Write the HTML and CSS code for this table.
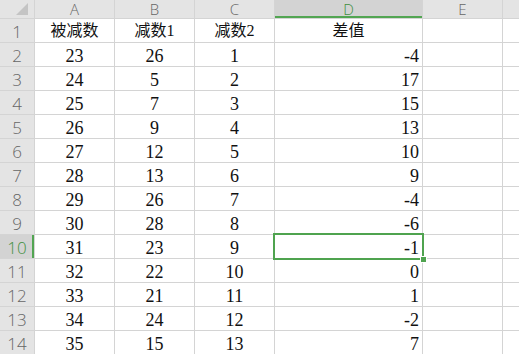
FILE: index.html
```html
<!DOCTYPE html>
<html lang="zh">
<head>
<meta charset="utf-8">
<link rel="stylesheet" href="styles.css">
</head>
<body>
<div class="sheet">
  <div class="corner"><svg width="34" height="18" viewBox="0 0 34 18"><polygon points="28,3 28,15 16,15" fill="#c4c4c4"/></svg></div>
  <div class="ch">A</div><div class="ch">B</div><div class="ch">C</div><div class="ch sel">D</div><div class="ch">E</div><div class="ch"></div>

  <div class="rh">1</div><div class="c zh">被减数</div><div class="c zh">减数1</div><div class="c zh">减数2</div><div class="c zh">差值</div><div class="c e"></div><div class="c e"></div>
  <div class="rh">2</div><div class="c">23</div><div class="c">26</div><div class="c">1</div><div class="c r">-4</div><div class="c e"></div><div class="c e"></div>
  <div class="rh">3</div><div class="c">24</div><div class="c">5</div><div class="c">2</div><div class="c r">17</div><div class="c e"></div><div class="c e"></div>
  <div class="rh">4</div><div class="c">25</div><div class="c">7</div><div class="c">3</div><div class="c r">15</div><div class="c e"></div><div class="c e"></div>
  <div class="rh">5</div><div class="c">26</div><div class="c">9</div><div class="c">4</div><div class="c r">13</div><div class="c e"></div><div class="c e"></div>
  <div class="rh">6</div><div class="c">27</div><div class="c">12</div><div class="c">5</div><div class="c r">10</div><div class="c e"></div><div class="c e"></div>
  <div class="rh">7</div><div class="c">28</div><div class="c">13</div><div class="c">6</div><div class="c r">9</div><div class="c e"></div><div class="c e"></div>
  <div class="rh">8</div><div class="c">29</div><div class="c">26</div><div class="c">7</div><div class="c r">-4</div><div class="c e"></div><div class="c e"></div>
  <div class="rh">9</div><div class="c">30</div><div class="c">28</div><div class="c">8</div><div class="c r">-6</div><div class="c e"></div><div class="c e"></div>
  <div class="rh sel">10</div><div class="c">31</div><div class="c">23</div><div class="c">9</div><div class="c r active">-1<span class="box"><span class="handle"></span></span></div><div class="c e"></div><div class="c e"></div>
  <div class="rh">11</div><div class="c">32</div><div class="c">22</div><div class="c">10</div><div class="c r">0</div><div class="c e"></div><div class="c e"></div>
  <div class="rh">12</div><div class="c">33</div><div class="c">21</div><div class="c">11</div><div class="c r">1</div><div class="c e"></div><div class="c e"></div>
  <div class="rh">13</div><div class="c">34</div><div class="c">24</div><div class="c">12</div><div class="c r">-2</div><div class="c e"></div><div class="c e"></div>
  <div class="rh">14</div><div class="c">35</div><div class="c">15</div><div class="c">13</div><div class="c r">7</div><div class="c e"></div><div class="c e"></div>
</div>
</body>
</html>
```

FILE: styles.css
```css
html, body {
  margin: 0;
  padding: 0;
  background: #ffffff;
  overflow: hidden;
}
.sheet {
  display: grid;
  grid-template-columns: 34px 79px 79px 79px 147px 79px 20px;
  grid-template-rows: 18px repeat(14, 23px);
  gap: 1px;
  background: #d4d4d4;
  width: 540px;
}
.corner {
  background: #e4e4e4;
}
.corner svg { display: block; }
.ch {
  background: #e4e4e4;
  color: #666666;
  font-family: "Open Sans", "Noto Sans", sans-serif;
  font-size: 15px;
  line-height: 18px;
  text-align: center;
  font-weight: 300;
}
.ch.sel {
  background: #d3d3d3;
  color: #3f8f3f;
  box-shadow: inset 0 -2px 0 #52a552;
}
.rh {
  background: #e4e4e4;
  color: #666666;
  font-family: "Open Sans", "Noto Sans", sans-serif;
  font-size: 17px;
  font-weight: 300;
  line-height: 23px;
  text-align: center;
  padding-top: 1px;
  box-sizing: border-box;
}
.rh.sel {
  background: #d3d3d3;
  color: #3f8f3f;
  box-shadow: inset -2px 0 0 #52a552;
}
.c {
  background: #ffffff;
  color: #111;
  font-family: "Liberation Serif", "Noto Sans CJK SC", serif;
  font-size: 18px;
  line-height: 23px;
  text-align: center;
  padding-top: 2px;
  box-sizing: border-box;
  white-space: nowrap;
}
.c.zh {
  font-size: 16px;
  padding-top: 0;
}
.c.r {
  text-align: right;
  padding-right: 3px;
}
.c.active {
  position: relative;
}
.box {
  position: absolute;
  left: -2px;
  top: -2px;
  right: -2px;
  bottom: -2px;
  border: 2px solid #4fa34f;
  pointer-events: none;
}
.handle {
  position: absolute;
  right: -5px;
  bottom: -5px;
  width: 5px;
  height: 5px;
  background: #4fa34f;
  border: 1px solid #ffffff;
}
```
